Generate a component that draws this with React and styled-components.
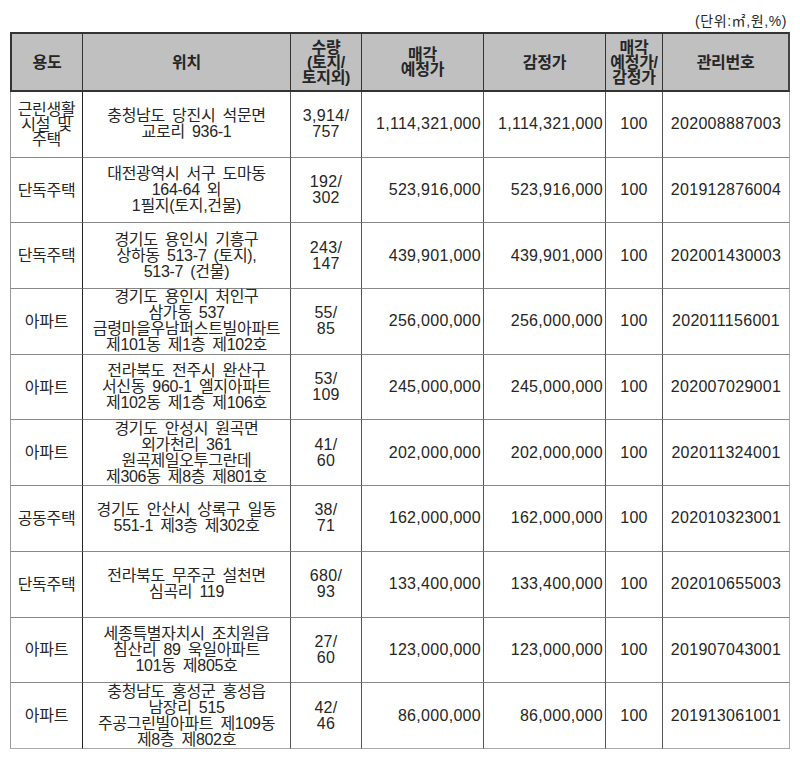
import React from 'react';
import styled, { createGlobalStyle } from 'styled-components';

const GlobalStyle = createGlobalStyle`
  body {
    margin: 0;
    background: #fff;
    color: #262626;
    font-family: "Liberation Sans", "Noto Sans CJK KR", sans-serif;
  }
`;

const Page = styled.div`
  width: 780px;
  padding-left: 10px;
`;

const Unit = styled.div`
  height: 32px;
  box-sizing: border-box;
  display: flex;
  align-items: flex-end;
  justify-content: flex-end;
  padding: 0 3px 3px 0;
  font-size: 14px;
  line-height: 15px;
  letter-spacing: 0.6px;
`;

const Table = styled.table`
  width: 780px;
  table-layout: fixed;
  border-collapse: separate;
  border-spacing: 0;
`;

const HeadRow = styled.tr`
  height: 60px;
`;

const Row = styled.tr`
  height: 65.7px;
`;

const HeadCell = styled.th`
  padding: 0 1px;
  background: #c0c0c0;
  font-size: 16px;
  font-weight: bold;
  line-height: 15px;
  letter-spacing: -0.3px;
  text-align: center;
  vertical-align: middle;
  white-space: nowrap;
  border-top: 2px solid #333;
  border-bottom: 2px solid #333;
  border-right: 1px solid #333;
  &:first-child {
    border-left: 2px solid #333;
  }
  &:last-child {
    border-right: 2px solid #444;
  }
`;

const Cell = styled.td`
  padding: 0 ${(p) => (p.$align === 'right' ? '2px' : '0')};
  font-size: 16px;
  line-height: ${(p) => p.$lh || '16px'};
  letter-spacing: ${(p) => (p.$num ? '0.3px' : '-0.3px')};
  word-spacing: 3px;
  text-align: ${(p) => p.$align || 'center'};
  vertical-align: middle;
  white-space: nowrap;
  overflow: visible;
  border-bottom: 1px solid ${(p) => (p.$last ? '#aaa' : '#888')};
  border-right: 1px solid ${(p) => (p.$dark ? '#222' : '#555')};
  &:first-child {
    border-left: 1px solid #999;
  }
  &:last-child {
    border-right: 1px solid #aaa;
  }
`;

const cols = [73, 208, 71, 122, 122, 57, 127];

const rows = [
  {
    use: ['근린생활', '시설 및', '주택'],
    loc: ['충청남도 당진시 석문면', '교로리 936-1'],
    qty: ['3,914/', '757'],
    price: '1,114,321,000',
    appraisal: '1,114,321,000',
    id: '202008887003',
  },
  {
    use: ['단독주택'],
    loc: ['대전광역시 서구 도마동', '164-64 외', '1필지(토지,건물)'],
    qty: ['192/', '302'],
    price: '523,916,000',
    appraisal: '523,916,000',
    id: '201912876004',
  },
  {
    use: ['단독주택'],
    loc: ['경기도 용인시 기흥구', '상하동 513-7 (토지),', '513-7 (건물)'],
    qty: ['243/', '147'],
    price: '439,901,000',
    appraisal: '439,901,000',
    id: '202001430003',
  },
  {
    use: ['아파트'],
    loc: ['경기도 용인시 처인구', '삼가동 537', '금령마을우남퍼스트빌아파트', '제101동 제1층 제102호'],
    qty: ['55/', '85'],
    price: '256,000,000',
    appraisal: '256,000,000',
    id: '202011156001',
  },
  {
    use: ['아파트'],
    loc: ['전라북도 전주시 완산구', '서신동 960-1 엘지아파트', '제102동 제1층 제106호'],
    qty: ['53/', '109'],
    price: '245,000,000',
    appraisal: '245,000,000',
    id: '202007029001',
  },
  {
    use: ['아파트'],
    loc: ['경기도 안성시 원곡면', '외가천리 361', '원곡제일오투그란데', '제306동 제8층 제801호'],
    qty: ['41/', '60'],
    price: '202,000,000',
    appraisal: '202,000,000',
    id: '202011324001',
  },
  {
    use: ['공동주택'],
    loc: ['경기도 안산시 상록구 일동', '551-1 제3층 제302호'],
    qty: ['38/', '71'],
    price: '162,000,000',
    appraisal: '162,000,000',
    id: '202010323001',
  },
  {
    use: ['단독주택'],
    loc: ['전라북도 무주군 설천면', '심곡리 119'],
    qty: ['680/', '93'],
    price: '133,400,000',
    appraisal: '133,400,000',
    id: '202010655003',
  },
  {
    use: ['아파트'],
    loc: ['세종특별자치시  조치원읍', '침산리 89 욱일아파트', '101동 제805호'],
    qty: ['27/', '60'],
    price: '123,000,000',
    appraisal: '123,000,000',
    id: '201907043001',
  },
  {
    use: ['아파트'],
    loc: ['충청남도 홍성군 홍성읍', '남장리 515', '주공그린빌아파트 제109동', '제8층 제802호'],
    qty: ['42/', '46'],
    price: '86,000,000',
    appraisal: '86,000,000',
    id: '201913061001',
  },
];

const Lines = ({ items }) =>
  items.map((t, i) => (
    <React.Fragment key={i}>
      {i > 0 && <br />}
      {t}
    </React.Fragment>
  ));

export default function App() {
  return (
    <Page>
      <GlobalStyle />
      <Unit>(단위:㎡,원,%)</Unit>
      <Table>
        <colgroup>
          {cols.map((w, i) => (
            <col key={i} style={{ width: w }} />
          ))}
        </colgroup>
        <thead>
          <HeadRow>
            <HeadCell>용도</HeadCell>
            <HeadCell>위치</HeadCell>
            <HeadCell>
              <Lines items={['수량', '(토지/', '토지외)']} />
            </HeadCell>
            <HeadCell>
              <Lines items={['매각', '예정가']} />
            </HeadCell>
            <HeadCell>감정가</HeadCell>
            <HeadCell>
              <Lines items={['매각', '예정가/', '감정가']} />
            </HeadCell>
            <HeadCell>관리번호</HeadCell>
          </HeadRow>
        </thead>
        <tbody>
          {rows.map((r, i) => {
            const last = i === rows.length - 1;
            return (
              <Row key={r.id}>
                <Cell $dark $last={last} $lh="15px">
                  <Lines items={r.use} />
                </Cell>
                <Cell $last={last}>
                  <Lines items={r.loc} />
                </Cell>
                <Cell $num $last={last}>
                  <Lines items={r.qty} />
                </Cell>
                <Cell $num $align="right" $last={last}>{r.price}</Cell>
                <Cell $num $align="right" $last={last}>{r.appraisal}</Cell>
                <Cell $num $last={last}>100</Cell>
                <Cell $num $last={last}>{r.id}</Cell>
              </Row>
            );
          })}
        </tbody>
      </Table>
    </Page>
  );
}
